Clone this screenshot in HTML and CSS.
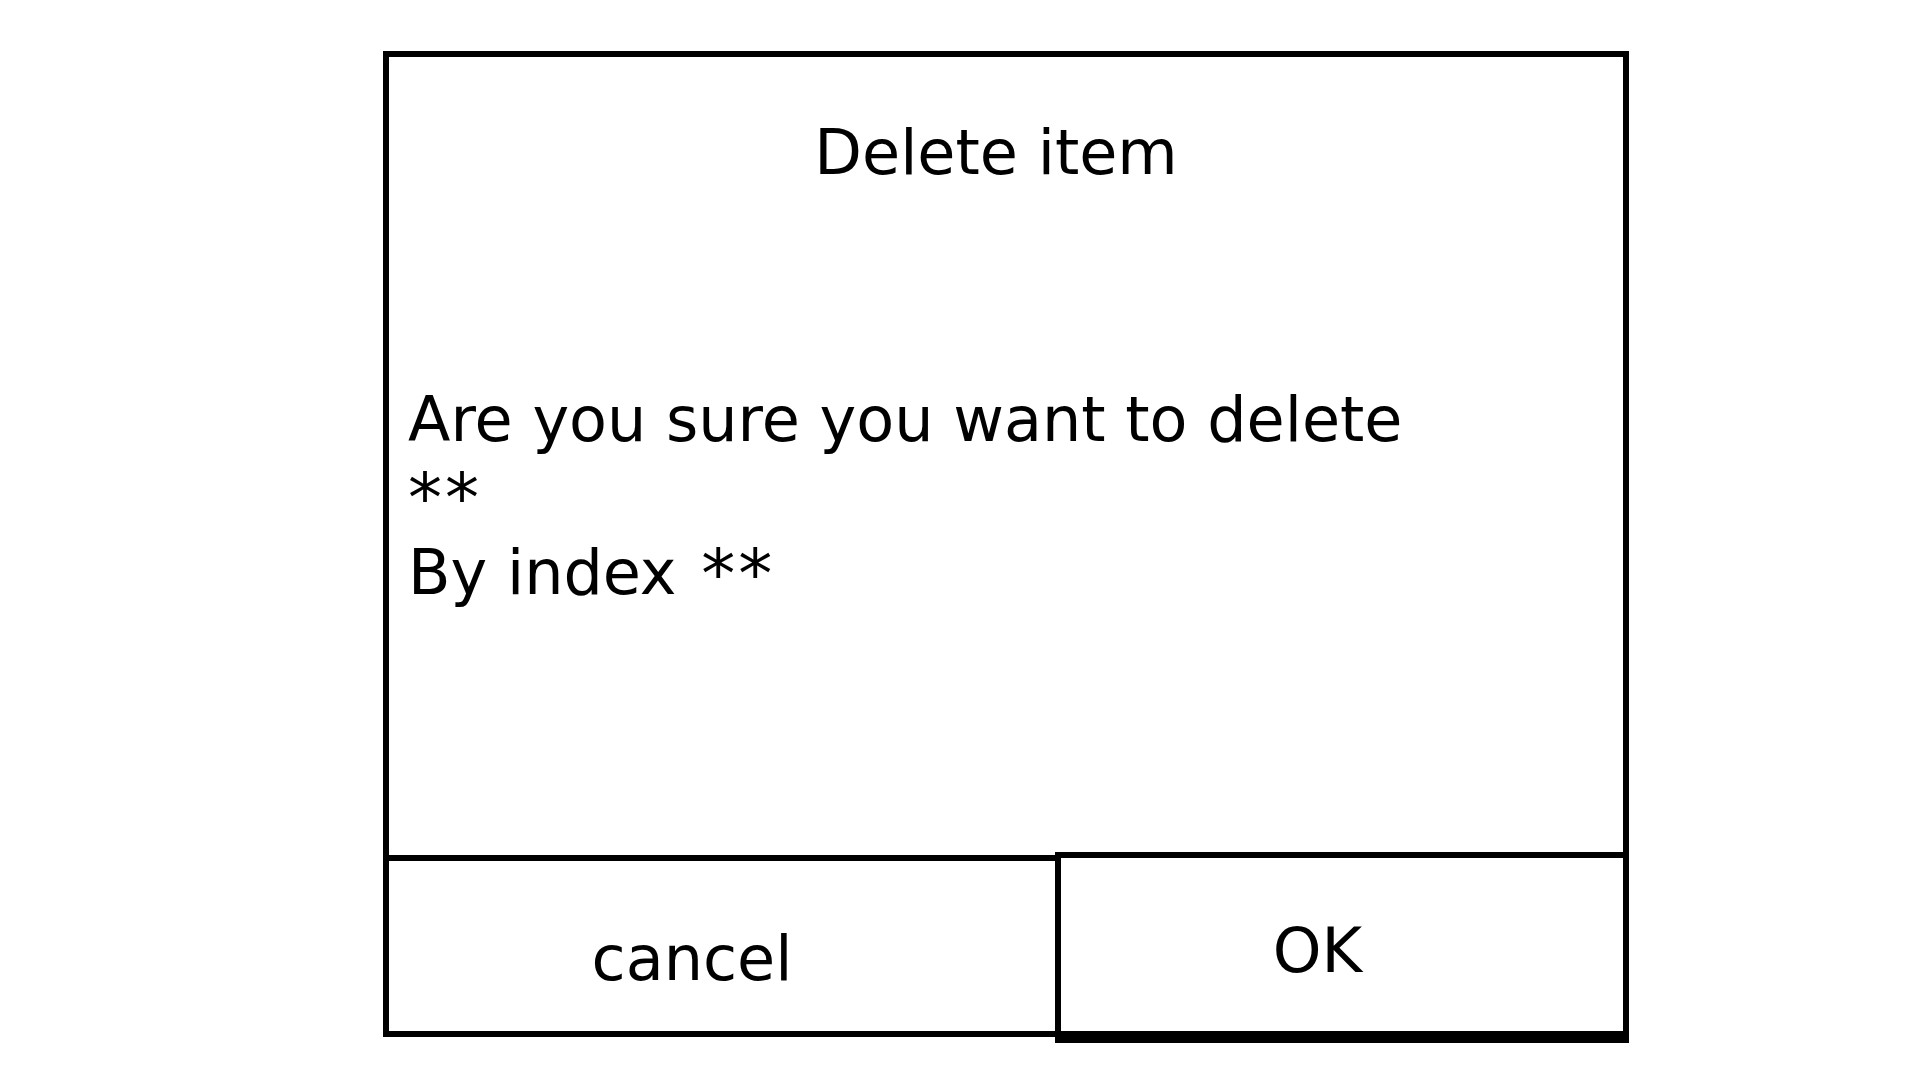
FILE: index.html
```html
<!DOCTYPE html>
<html lang="en">
<head>
<meta charset="utf-8">
<title>Delete item</title>
<link rel="stylesheet" href="styles.css">
</head>
<body>
<div class="dialog">
  <div class="panel">
    <h1 class="title">Delete item</h1>
    <p class="message">Are you sure you want to delete<br><span class="ast">**</span><br>By index <span class="ast ast-after">**</span></p>
  </div>
  <div class="footer">
    <div class="btn cancel" role="button">cancel</div>
    <div class="btn ok" role="button">OK</div>
  </div>
</div>
</body>
</html>
```
FILE: styles.css
```css
html, body {
  margin: 0;
  padding: 0;
  background: #ffffff;
}

.dialog {
  width: 1246px;
  margin: 51px 0 0 383px;
  font-family: "DejaVu Sans", Verdana, sans-serif;
  font-size: 62px;
  color: #000000;
}

.panel {
  box-sizing: border-box;
  width: 1246px;
  height: 804px;
  border: 6px solid #000000;
  border-bottom: none;
  background: #ffffff;
}

.title {
  margin: 0;
  padding: 60px 20px 0 0;
  font-size: 62px;
  font-weight: normal;
  line-height: 72px;
  text-align: center;
}

.message {
  margin: 193px 0 0 0;
  padding-left: 19px;
  line-height: 76.5px;
}

.ast {
  font-size: 68px;
  line-height: 0;
  letter-spacing: 3px;
  vertical-align: -3px;
}

.ast-after {
  margin-left: 5px;
}

.footer {
  display: flex;
  align-items: flex-start;
}

.btn {
  box-sizing: border-box;
  border: 6px solid #000000;
  background: #ffffff;
  line-height: 72px;
  text-align: center;
}

.cancel {
  width: 678px;
  height: 182px;
  padding: 62px 60px 0 0;
}

.ok {
  width: 574px;
  height: 191px;
  margin: -3px 0 0 -6px;
  border-bottom-width: 12px;
  padding: 57px 49px 0 0;
}
```
